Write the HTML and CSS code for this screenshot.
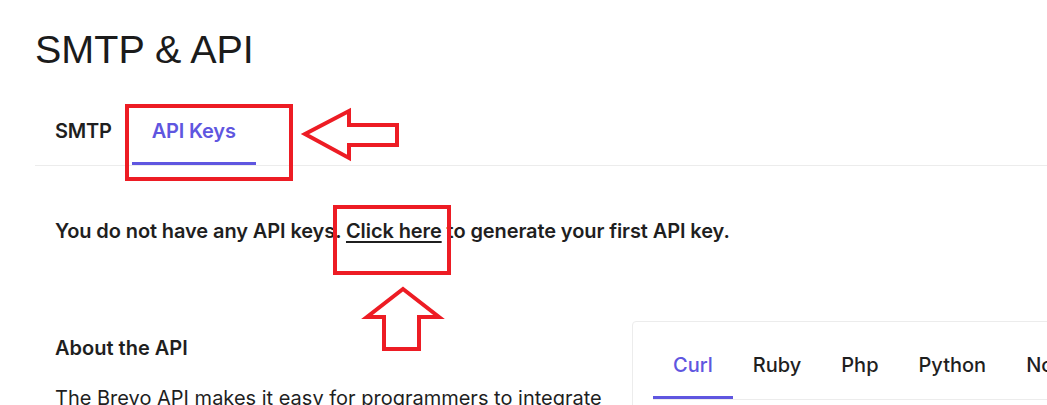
FILE: index.html
```html
<!DOCTYPE html>
<html lang="en">
<head>
  <meta charset="UTF-8">
  <title>SMTP &amp; API</title>
  <link rel="stylesheet" href="styles.css">
</head>
<body>
  <div class="page">
    <h1 class="title">SMTP &amp; API</h1>

    <nav class="tabs">
      <a class="tab">SMTP</a>
      <a class="tab active">API Keys</a>
    </nav>

    <div class="panel">
      <p class="notice">You do not have any API keys. <a href="#">Click here</a> to generate your first API key.</p>

      <div class="cols">
        <div class="about">
          <h3>About the API</h3>
          <p>The Brevo API makes it easy for programmers to integrate many of Brevo's features into other applications.</p>
        </div>
        <div class="code-card">
          <div class="lang-tabs">
            <a class="lang active">Curl</a>
            <a class="lang">Ruby</a>
            <a class="lang">Php</a>
            <a class="lang">Python</a>
            <a class="lang">Node.js</a>
            <a class="lang">Java</a>
          </div>
        </div>
      </div>
    </div>

    <!-- screenshot annotations -->
    <svg class="marks" width="1047" height="405" viewBox="0 0 1047 405">
      <g fill="none" stroke="#ed1c24" stroke-width="4">
        <rect x="127" y="106" width="164" height="73"/>
        <polygon points="305,134 349,111 349,125 397,125 397,145 349,145 349,158"/>
        <rect x="335" y="207" width="114" height="66"/>
        <polygon points="403,289 439,317 419,317 419,349 384,349 384,317 367,317"/>
      </g>
    </svg>
  </div>
</body>
</html>
```

FILE: styles.css
```css
body { margin: 0; background: #fff; color: #1f1f1f; font-family: Inter, "Noto Sans", sans-serif; overflow: hidden; }
a { color: inherit; text-decoration: none; }

.page { position: relative; padding: 25px 0 0 35px; width: 1300px; }
.title { margin: 0; font-family: "Liberation Sans", Arial, sans-serif; font-weight: 400; font-size: 39.5px; line-height: 48px; color: #1b1b1b; }

.tabs { display: flex; margin-top: 46px; border-bottom: 1px solid #ececec; }
.tab {
  padding: 0 20px 19px;
  font-size: 20px;
  line-height: 24px;
  font-weight: 600;
  letter-spacing: -0.2px;
  border-bottom: 3px solid transparent;
}
.tab.active { color: #5f56e0; border-color: #5f56e0; }

.panel { padding: 0 20px; }
.notice { margin: 53px 0 0; font-size: 20px; line-height: 24px; font-weight: 600; letter-spacing: -0.1px; }
.notice a { text-decoration: underline; text-decoration-thickness: 2px; text-underline-offset: 3px; }

.cols { display: flex; gap: 12px; margin-top: 78px; }
.about { width: 565px; flex: none; padding-top: 15px; }
.about h3 { margin: 0; font-size: 20px; line-height: 24px; font-weight: 600; }
.about p { margin: 24px 0 0; font-size: 20px; line-height: 28px; font-weight: 400; }

.code-card { flex: 1; border: 1px solid #ececec; border-radius: 4px; padding: 31px 20px 0; }
.lang-tabs { display: flex; border-bottom: 1px solid #ececec; }
.lang {
  padding: 0 20px 19px;
  font-size: 20px;
  line-height: 24px;
  font-weight: 500;
  border-bottom: 3px solid transparent;
}
.lang.active { color: #5f56e0; border-color: #5f56e0; }

.marks { position: absolute; top: 0; left: 0; pointer-events: none; }
```
